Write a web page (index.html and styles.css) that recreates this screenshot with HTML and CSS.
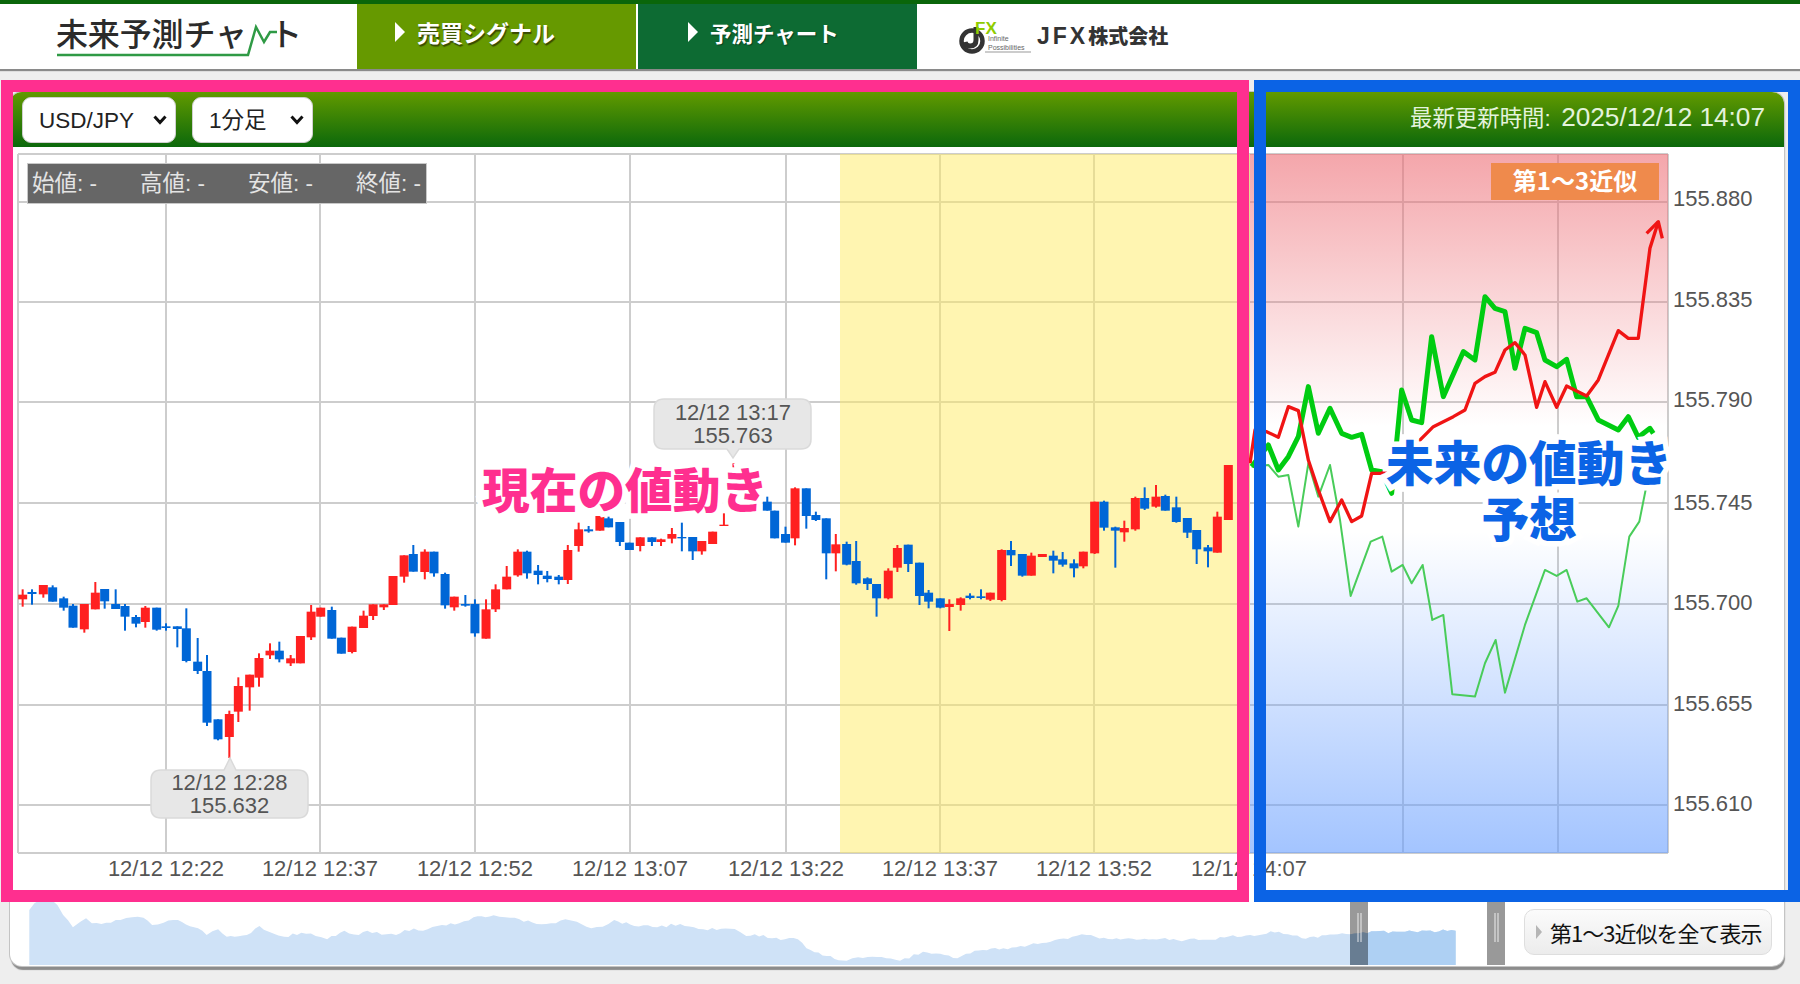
FILE: index.html
```html
<!DOCTYPE html>
<html lang="ja">
<head>
<meta charset="utf-8">
<title>未来予測チャート</title>
<link rel="stylesheet" href="styles.css">
</head>
<body>
<header class="topbar">
  <a class="logo">
    <svg class="logo-svg" viewBox="0 4 357 65" width="357" height="65">
      <text class="logo-text" x="56" y="46" textLength="191">未来予測チャ</text>
      <text class="logo-text" x="270" y="46">ト</text>
      <polyline class="logo-line" points="57,55 248,55 256,27 264,42 270,32 277,32"/>
    </svg>
  </a>
  <a class="tab tab-signal"><span class="tri"></span>売買シグナル</a>
  <a class="tab tab-forecast"><span class="tri"></span>予測チャート</a>
  <div class="brand">
    <svg class="brand-mark" viewBox="0 0 72 34" width="72" height="34">
      <circle class="mark-ring" cx="13" cy="21" r="10.5"/>
      <path class="mark-j" d="M17 7 V20 Q17 26 11 26 Q7 26 6 22"/>
      <text class="mark-fx" x="16" y="14">FX</text>
      <text class="mark-small" x="29" y="21">Infinite</text>
      <text class="mark-small" x="29" y="30">Possibilities</text>
      <line class="mark-rule" x1="26" y1="32" x2="72" y2="32"/>
    </svg>
    <span class="brand-name"><span class="brand-latin">JFX</span>株式会社</span>
  </div>
</header>

<main class="card">
  <div class="toolbar">
    <select class="sel sel-pair"><option>USD/JPY</option></select>
    <select class="sel sel-span"><option>1分足</option></select>
    <div class="updated"><span class="updated-label">最新更新時間:</span> <span class="updated-time">2025/12/12 14:07</span></div>
  </div>

  <div class="chart">
    <svg id="plot" class="plot" viewBox="10 147 1774 748" width="1774" height="748">
      <defs>
        <linearGradient id="future" x1="0" y1="0" x2="0" y2="1">
          <stop offset="0" stop-color="#ed6b73" stop-opacity="0.6"/>
          <stop offset="0.39" stop-color="#ed6b73" stop-opacity="0"/>
          <stop offset="0.54" stop-color="#669dff" stop-opacity="0"/>
          <stop offset="1" stop-color="#669dff" stop-opacity="0.6"/>
        </linearGradient>
      </defs>
      <g class="grid">
        <path d="M18 154H1668M18 202H1668M18 302H1668M18 402H1668M18 503H1668M18 604H1668M18 705H1668M18 805H1668M18 853H1668"/>
        <path d="M18 154V853M166 154V853M320 154V853M475 154V853M630 154V853M786 154V853M940 154V853M1094 154V853M1249 154V853M1403 154V853M1558 154V853M1668 154V853"/>
      </g>
      <rect class="zone-recent" x="840" y="154" width="410" height="699"/>
      <rect x="1250" y="154" width="418" height="699" fill="url(#future)"/>
      <g id="candles"></g>
      <g class="lines" transform="translate(1220 200) scale(0.3333)">
        <polyline class="line-thin" points="95,800 145,795 175,830 205,825 235,980 265,790 295,890 330,795 360,960 392,1188 452,1025 487,1010 515,1115 548,1095 575,1150 608,1095 637,1260 670,1245 697,1483 765,1490 795,1390 827,1320 855,1478 915,1275 975,1110 1010,1128 1040,1110 1072,1205 1100,1195 1167,1282 1195,1218 1228,1010 1258,965 1285,830"/>
        <polyline class="line-green" points="95,800 145,735 175,810 205,770 235,710 265,560 295,700 330,625 365,700 395,712 425,703 455,810 485,815 515,880 545,570 575,660 605,668 635,410 670,590 730,455 765,480 795,290 825,325 855,335 885,505 915,385 950,398 975,480 1010,500 1040,478 1070,590 1100,590 1135,660 1195,690 1225,650 1255,712 1290,685 1300,700"/>
        <polyline class="line-red" points="90,790 105,690 140,695 175,712 205,620 235,632 265,780 295,870 330,965 365,900 395,965 425,948 455,820 485,820 540,780 620,700 640,680 700,650 735,630 765,550 795,530 825,517 855,450 885,428 915,465 950,622 975,545 1010,622 1040,558 1100,588 1135,540 1195,392 1225,415 1255,415 1290,145 1315,65"/>
        <polyline class="line-red" points="1280,100 1315,65 1327,115"/>
      </g>
      <g class="xaxis">
        <text x="166" y="876">12/12 12:22</text>
        <text x="320" y="876">12/12 12:37</text>
        <text x="475" y="876">12/12 12:52</text>
        <text x="630" y="876">12/12 13:07</text>
        <text x="786" y="876">12/12 13:22</text>
        <text x="940" y="876">12/12 13:37</text>
        <text x="1094" y="876">12/12 13:52</text>
        <text x="1249" y="876">12/12 14:07</text>
      </g>
      <g class="yaxis">
        <text x="1673" y="206">155.880</text>
        <text x="1673" y="307">155.835</text>
        <text x="1673" y="407">155.790</text>
        <text x="1673" y="510">155.745</text>
        <text x="1673" y="610">155.700</text>
        <text x="1673" y="711">155.655</text>
        <text x="1673" y="811">155.610</text>
      </g>
      <g class="badge">
        <rect x="1491" y="163" width="168" height="37"/>
        <text x="1575" y="190">第1〜3近似</text>
      </g>
      <g class="callout">
        <path d="M161 770 H224 L230 758 L236 770 H298 Q308 770 308 780 V808 Q308 818 298 818 H161 Q151 818 151 808 V780 Q151 770 161 770Z"/>
        <text x="229.5" y="790">12/12 12:28</text>
        <text x="229.5" y="813">155.632</text>
      </g>
      <g class="callout">
        <path d="M664 399 H801 Q811 399 811 409 V439 Q811 449 801 449 H739 L733 458 L727 449 H664 Q654 449 654 439 V409 Q654 399 664 399Z"/>
        <text x="733" y="420">12/12 13:17</text>
        <text x="733" y="443">155.763</text>
      </g>
    </svg>
    <div class="ohlc">
      <span class="ohlc-item">始値: -</span>
      <span class="ohlc-item">高値: -</span>
      <span class="ohlc-item">安値: -</span>
      <span class="ohlc-item">終値: -</span>
    </div>
  </div>

  <div class="nav">
    <svg class="nav-svg" viewBox="10 895 1500 71" width="1500" height="71">
      <defs>
        <clipPath id="selected"><rect x="1350" y="895" width="106" height="71"/></clipPath>
      </defs>
      <g transform="translate(0 840) scale(0.574 0.3333)">
        <polygon id="area" points="51,210 60,190 75,182 90,180 100,195 110,225 127,262 140,245 150,235 160,250 185,248 210,240 230,232 250,233 265,255 285,248 310,240 345,265 360,285 380,268 395,290 430,285 452,258 475,280 495,290 525,278 550,288 570,298 600,272 625,285 640,272 665,284 690,285 705,270 745,268 770,255 800,250 825,232 860,226 880,232 905,238 935,252 960,250 985,238 1005,245 1030,265 1050,260 1070,240 1105,258 1145,262 1185,252 1225,268 1280,267 1300,288 1330,285 1345,295 1390,298 1405,325 1440,348 1475,362 1495,352 1520,350 1568,362 1608,335 1668,355 1698,332 1748,325 1778,318 1808,312 1868,290 1893,285 1938,298 2008,298 2088,300 2178,285 2228,275 2268,295 2338,280 2448,275 2536,272 2536,375 51,375"/>
      </g>
      <rect class="handle" x="1350" y="895" width="18" height="70"/>
      <rect class="handle" x="1487" y="895" width="18" height="70"/>
      <path class="grip" d="M1358 913V942M1361 913V942M1495 913V942M1498 913V942"/>
    </svg>
    <button class="show-all" type="button"><span class="tri-gray"></span>第1〜3近似を全て表示</button>
  </div>
</main>

<div class="frame frame-now"></div>
<div class="frame frame-future"></div>
<div class="note note-now">現在の値動き</div>
<div class="note note-future">未来の値動き<br>予想</div>

<script src="chart.js"></script>
</body>
</html>
```
FILE: styles.css
```css
* { box-sizing: border-box; }
html, body { margin: 0; padding: 0; }
body {
  width: 1800px;
  height: 984px;
  overflow: hidden;
  position: relative;
  background: #eeeeee;
  font-family: "Liberation Sans", "Noto Sans CJK JP", sans-serif;
  color: #333;
}

/* top bar */
.topbar {
  display: flex;
  height: 69px;
  background: #fff;
  border-top: 4px solid #0a660a;
  box-shadow: 0 2px 1px #8a8a8a;
}
.logo { width: 357px; flex: none; }
.logo-svg { display: block; }
.logo-text { font-family: "Noto Sans CJK JP", sans-serif; font-size: 32px; font-weight: 500; fill: #2b2b2b; }
.logo-line { fill: none; stroke: #2f9a45; stroke-width: 2.5; }
.tab {
  display: flex;
  align-items: center;
  flex: none;
  height: 65px;
  padding-bottom: 9px;
  color: #fff;
  font-weight: 700;
  font-family: "Noto Sans CJK JP", sans-serif;
}
.tab-signal {
  width: 281px;
  padding-left: 38px;
  background: #669900;
  border-right: 2px solid #fff;
  font-size: 23px;
  text-shadow: 1px 2px 1px #3a4a00;
}
.tab-forecast {
  width: 279px;
  padding-left: 50px;
  background: #0d6b33;
  font-size: 21.5px;
  text-shadow: 1px 1px 1px #0a4020;
}
.tri {
  width: 0;
  height: 0;
  margin-right: 12px;
  border-left: 10px solid #fff;
  border-top: 10px solid transparent;
  border-bottom: 10px solid transparent;
}
.brand { display: flex; align-items: center; padding-left: 42px; padding-bottom: 3px; }
.brand-mark { display: block; margin-top: 3px; }
.mark-ring { fill: none; stroke: #333; stroke-width: 4.5; }
.mark-j { fill: none; stroke: #333; stroke-width: 5; }
.mark-fx { font-family: "Liberation Sans", sans-serif; font-weight: 700; font-size: 17px; fill: #8fcc00; }
.mark-small { font-family: "Liberation Sans", sans-serif; font-size: 7px; fill: #666; }
.mark-rule { stroke: #999; stroke-width: 1; }
.brand-name {
  margin-left: 6px;
  font-family: "Noto Sans CJK JP", sans-serif;
  font-weight: 900;
  font-size: 20px;
  color: #333;
}
.brand-latin { font-family: "Liberation Sans", sans-serif; font-weight: 700; font-size: 23px; letter-spacing: 3px; }

/* main card */
.card {
  width: 1774px;
  height: 874px;
  margin: 23px 0 0 10px;
  background: #fff;
  border-radius: 12px;
  box-shadow: 0 0 0 1px #c4c4c4, 1px 4px 1px #8c8c8c;
}
.toolbar {
  display: flex;
  align-items: center;
  gap: 16px;
  height: 55px;
  padding: 0 19px 0 12px;
  border-radius: 12px 12px 0 0;
  background: linear-gradient(#629a00, #0b680b);
}
.sel {
  appearance: none;
  -webkit-appearance: none;
  height: 46px;
  background: #fff url("data:image/svg+xml,%3Csvg xmlns='http://www.w3.org/2000/svg' width='14' height='10'%3E%3Cpath d='M1.5 1.5 L7 7.5 L12.5 1.5' fill='none' stroke='%23111' stroke-width='3'/%3E%3C/svg%3E") no-repeat right 8px center;
  border: 1px solid #d0d0d0;
  border-radius: 9px;
  font-family: "Liberation Sans", "Noto Sans CJK JP", sans-serif;
  font-size: 22.5px;
  color: #222;
  padding: 2px 0 0 16px;
}
.sel-pair { width: 154px; }
.sel-span { width: 121px; }
.updated { margin-left: auto; padding-bottom: 6px; color: #e4f3dc; white-space: nowrap; }
.updated-label { font-size: 22.4px; margin-right: 6px; }
.updated-time { font-size: 26.2px; }

/* chart */
.chart { position: relative; height: 748px; }
.plot { display: block; }
.zone-recent { fill: #ffeb64; fill-opacity: 0.5; }
.grid path { fill: none; stroke: #cdcdcd; stroke-width: 2; }
.lines polyline { fill: none; stroke-linejoin: round; }
.line-thin { stroke: #49cc5a; stroke-width: 6; }
.line-green { stroke: #00cc11; stroke-width: 15; }
.line-red { stroke: #f01414; stroke-width: 10; }
.xaxis text { font-size: 22px; fill: #555; text-anchor: middle; }
.yaxis text { font-size: 22px; fill: #555; }
.badge rect { fill: #ef8a4c; }
.badge text { font-family: "Noto Sans CJK JP", sans-serif; font-size: 24px; font-weight: 700; fill: #fff; text-anchor: middle; }
.callout path { fill: #e7e7e7; stroke: #dadada; stroke-width: 1.5; }
.callout text { font-size: 22px; fill: #555; text-anchor: middle; }
.ohlc {
  position: absolute;
  left: 17px;
  top: 16px;
  display: flex;
  width: 400px;
  height: 41px;
  align-items: center;
  padding: 0 0 5px 4px;
  background: #666;
  border: 1px solid #c8c8c8;
  color: #e4e4e4;
  font-size: 22.5px;
}
.ohlc-item { width: 108px; flex: none; white-space: nowrap; }

/* navigator */
.nav { display: flex; height: 71px; border-radius: 0 0 12px 12px; overflow: hidden; }
.nav-svg { display: block; flex: none; }
#area { fill: #cfe2f7; }
.handle { fill: #000; fill-opacity: 0.4; }
.grip { fill: none; stroke: #fff; stroke-opacity: 0.55; stroke-width: 1.5; }
.show-all {
  display: flex;
  align-items: center;
  width: 248px;
  height: 46px;
  margin: 14px 0 0 14px;
  padding: 0 0 0 11px;
  border: 1px solid #dedede;
  border-radius: 10px;
  background: linear-gradient(#fbfbfb, #ececec);
  font-family: "Noto Sans CJK JP", sans-serif;
  font-size: 22px;
  letter-spacing: -1px;
  color: #111;
  white-space: nowrap;
}
.tri-gray {
  width: 0;
  height: 0;
  margin-right: 8px;
  border-left: 6px solid #b5b5b5;
  border-top: 7px solid transparent;
  border-bottom: 7px solid transparent;
}

/* review overlay */
.frame { position: absolute; top: 80px; height: 822px; border: 12px solid; }
.frame-now { left: 1px; width: 1248px; border-color: #ff2f8f; }
.frame-future { left: 1254px; right: 0; border-color: #0b63e5; }
.note {
  position: absolute;
  font-family: "Noto Sans CJK JP", sans-serif;
  font-weight: 900;
  font-size: 47.7px;
  line-height: 56px;
  text-align: center;
  white-space: nowrap;
  paint-order: stroke fill;
  -webkit-text-stroke: 11px #fff;
}
.note-now { left: 482px; top: 460px; color: #ff2f8f; }
.note-future { left: 1386px; top: 433px; color: #0b63e5; }
```
FILE: chart.js
```js
// Candles: [x, bodyTop, bodyBottom, wickTop, wickBottom, colour], in the coordinates of each block.
var blocks = [
  { sx: 3, sy: 3, x0: 0, y0: 560, rows: [
    [68,104,118,88,140,'R'],[96,96,102,88,134,'B'],[130,75,103,75,113,'R'],[158,82,125,76,125,'B'],
    [191,115,143,110,152,'B'],[219,137,203,132,203,'B'],[253,132,208,132,218,'R'],[286,98,148,66,148,'R'],
    [314,87,124,87,146,'B'],[347,132,147,88,147,'B'],[375,138,170,132,212,'B'],[408,171,191,165,202,'B'],
    [436,143,186,138,203,'R'],[470,143,209,143,212,'B'],[498,199,204,190,212,'B'],[532,199,207,199,262,'B'],
    [559,205,303,145,307,'B'],[593,305,333,234,342,'B'],[621,333,488,285,498,'B'],[654,478,538,478,541,'B'],
    [688,462,531,452,594,'R'],[715,378,455,352,486,'R'],[749,344,382,344,452,'R'],[777,294,353,280,380,'R'],
    [810,272,286,250,297,'R'],[838,272,298,245,307,'B'],[872,295,310,285,318,'R']
  ]},
  { sx: 2.613, sy: 3, x0: 0, y0: 540, rows: [
    [785,288,370,288,370,'R'],[813,215,292,195,300,'R'],[838,203,230,203,230,'R'],[867,210,296,200,296,'B'],
    [892,293,341,293,341,'B'],[920,260,336,260,340,'R'],[950,227,264,212,264,'R'],[975,193,228,193,240,'R'],
    [1003,193,202,193,210,'R'],[1027,108,195,108,195,'R'],[1056,46,110,46,128,'R'],[1080,42,95,15,95,'B'],
    [1110,35,96,28,118,'R'],[1134,35,100,35,110,'B'],[1163,102,196,98,206,'B'],[1187,170,202,170,212,'R'],
    [1216,192,197,165,200,'B'],[1241,192,280,178,290,'B'],[1270,208,296,178,296,'R'],[1295,148,208,133,216,'R'],
    [1324,110,148,78,148,'R'],[1353,35,106,28,110,'R'],[1377,35,100,32,116,'B'],[1406,92,105,75,133,'B'],
    [1430,107,117,93,127,'B'],[1460,110,120,105,133,'B']
  ]},
  { sx: 2.306, sy: 3, x0: 560, y0: 390, rows: [
    [18,480,570,465,582,'R'],[43,418,468,398,485,'R'],[66,418,424,408,428,'B'],[92,378,422,378,422,'R'],
    [112,385,412,380,412,'B'],[138,396,456,396,468,'B'],[160,458,480,458,480,'B'],[185,442,468,442,484,'R'],
    [212,442,456,442,468,'B'],[233,448,456,446,468,'R'],[258,432,446,414,460,'R'],[281,441,445,398,484,'B'],
    [306,441,484,441,510,'B'],[327,453,484,453,494,'R'],[352,425,462,425,462,'R'],[378,404,408,370,408,'R'],
    [400,250,300,220,320,'R'],[478,335,362,320,362,'B'],[495,362,445,362,445,'B'],[520,432,458,410,458,'B'],
    [542,295,445,292,466,'R'],[568,295,378,295,416,'B'],[590,375,390,365,393,'B'],[614,385,490,385,568,'B'],
    [636,463,490,432,544,'R'],[661,462,524,455,526,'B'],[683,513,580,453,584,'B'],[709,565,582,562,600,'B'],
    [730,582,625,582,680,'B'],[757,542,625,535,628,'R'],[778,474,533,465,546,'R'],[803,464,522,464,546,'B'],
    [829,518,618,518,645,'B'],[850,608,635,600,655,'B'],[877,625,653,625,655,'B']
  ]},
  { sx: 3, sy: 3, x0: 880, y0: 470, rows: [
    [208,402,411,388,483,'R'],[242,385,405,382,422,'R'],[270,377,384,370,388,'B'],[303,379,384,358,388,'B'],
    [331,368,389,368,393,'R'],[365,240,390,238,394,'R'],[393,240,256,213,288,'B'],[427,252,317,252,320,'B'],
    [454,257,317,248,317,'R'],[487,252,261,252,261,'R'],[520,257,272,242,310,'B'],[548,268,284,246,290,'B'],
    [582,280,295,268,322,'B'],[610,245,289,245,295,'R'],[644,95,250,95,252,'R'],[672,95,173,92,182,'B'],
    [706,172,182,170,293,'B'],[733,174,187,152,215,'R'],[766,84,178,80,182,'R'],[794,84,116,52,120,'B'],
    [828,80,110,45,113,'R'],[856,78,122,74,122,'B'],[889,112,156,80,158,'B'],[922,144,188,144,204,'B'],
    [950,180,238,180,282,'B'],[984,232,244,225,292,'B'],[1012,140,248,125,248,'R'],[1045,-15,150,-15,150,'R']
  ]}
];

var NS = 'http://www.w3.org/2000/svg';
var layer = document.getElementById('candles');
var COLOURS = { R: '#ff2020', B: '#0066d6' };

function rect(x, y, w, h, fill) {
  var r = document.createElementNS(NS, 'rect');
  r.setAttribute('x', x);
  r.setAttribute('y', y);
  r.setAttribute('width', w);
  r.setAttribute('height', Math.max(h, 1));
  r.setAttribute('fill', fill);
  layer.appendChild(r);
}

blocks.forEach(function (b) {
  b.rows.forEach(function (c) {
    var x = c[0] / b.sx + b.x0;
    var fill = COLOURS[c[5]];
    rect(x - 1, c[3] / b.sy + b.y0, 2, (c[4] - c[3]) / b.sy, fill);
    rect(x - 4.5, c[1] / b.sy + b.y0, 9, (c[2] - c[1]) / b.sy, fill);
  });
});

var area = document.getElementById('area');
var raw = area.getAttribute('points').trim().split(/\s+/).map(function (p) {
  return p.split(',').map(Number);
});
var outline = raw.slice(0, raw.length - 2);
var seed = 7;
function ripple() {
  seed = (seed * 137 + 71) % 251;
  return seed / 251 - 0.5;
}
var pts = [];
outline.forEach(function (p, i) {
  pts.push(p);
  var next = outline[i + 1];
  if (!next) return;
  var steps = Math.floor((next[0] - p[0]) / 7);
  for (var k = 1; k < steps; k++) {
    var t = k / steps;
    pts.push([p[0] + (next[0] - p[0]) * t, p[1] + (next[1] - p[1]) * t + ripple() * 9]);
  }
});
pts = pts.concat(raw.slice(raw.length - 2));
var pointList = pts.map(function (p) { return p[0].toFixed(1) + ',' + p[1].toFixed(1); }).join(' ');
area.setAttribute('points', pointList);

var group = area.parentNode;
var svg = group.parentNode;
var clipped = document.createElementNS(NS, 'g');
clipped.setAttribute('clip-path', 'url(#selected)');
var copyGroup = group.cloneNode(false);
var copy = document.createElementNS(NS, 'polygon');
copy.setAttribute('points', pointList);
copy.setAttribute('fill', '#aed0f3');
copyGroup.appendChild(copy);
clipped.appendChild(copyGroup);
svg.insertBefore(clipped, group.nextSibling);
```
